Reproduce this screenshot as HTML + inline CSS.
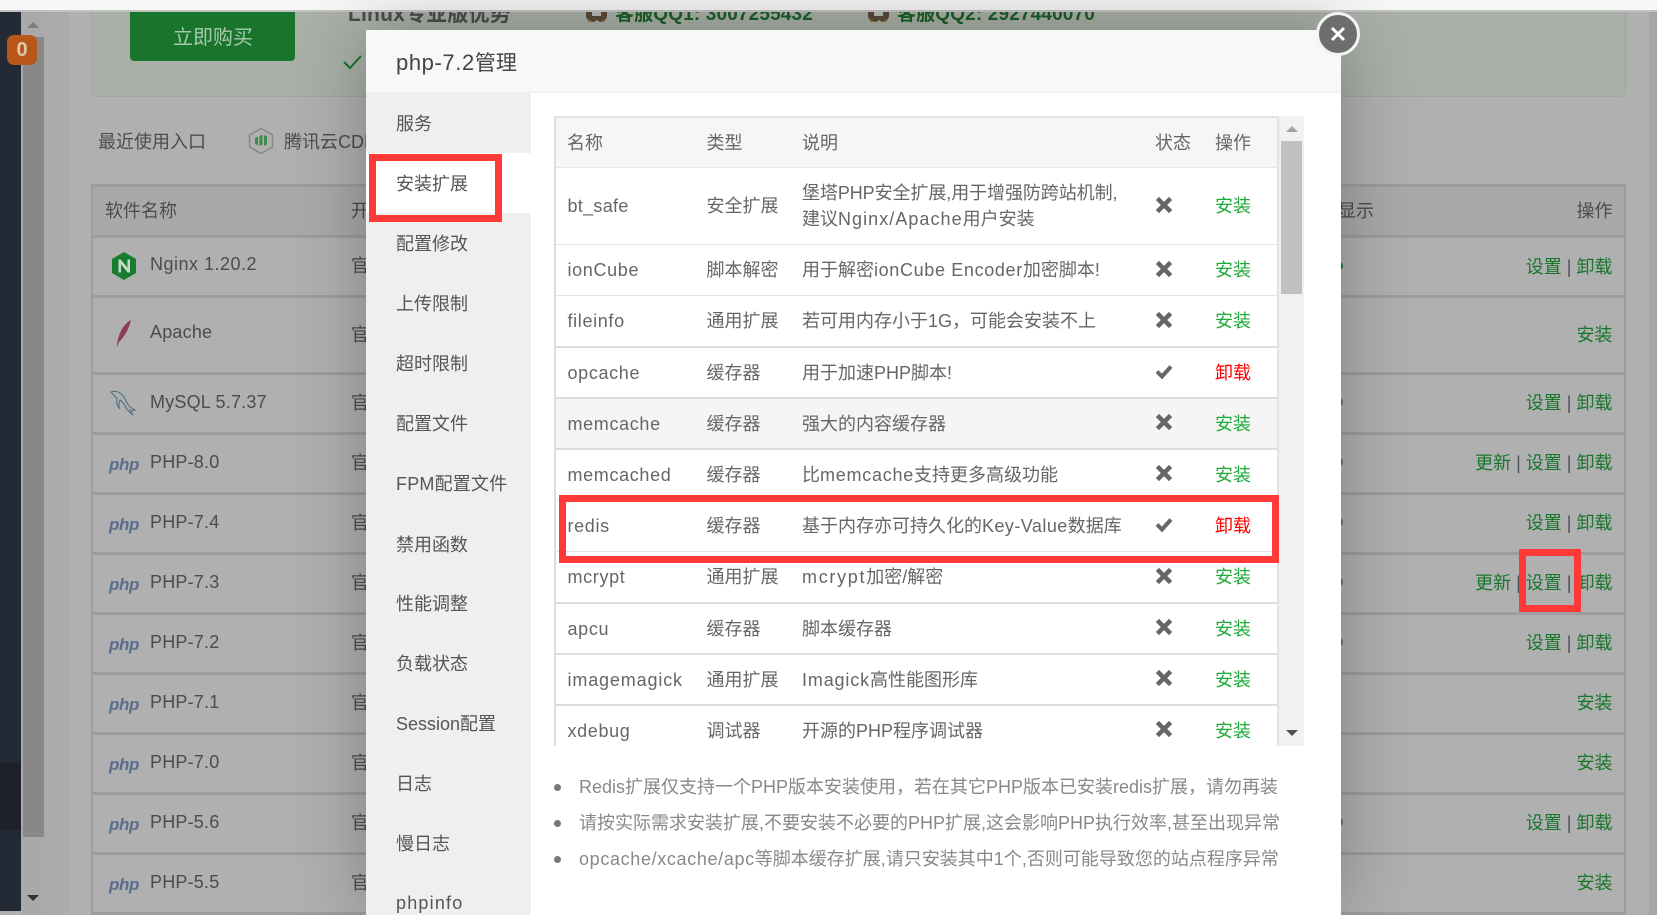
<!DOCTYPE html>
<html><head><meta charset="utf-8"><title>php-7.2管理</title>
<style>
html,body{margin:0;padding:0;width:1657px;height:915px;overflow:hidden;background:#b0b0b0}
body{position:relative;font:18px/26px "Liberation Sans","Noto Sans CJK SC",sans-serif;color:#4c4c4c}
.a{position:absolute}
.t{position:absolute;white-space:nowrap;height:26px;line-height:26px}
.r{position:absolute;white-space:nowrap;height:26px;line-height:26px;right:44.5px;color:#17762c}
.r i{font-style:normal;color:#4a4f58}
.l{position:absolute;left:91px;width:1535px;height:3px;background:#9d9d9d}
.p{position:absolute;left:109px;font:italic bold 17px/22px "Liberation Sans",sans-serif;color:#5b6d8e;letter-spacing:-.4px}
.n{position:absolute;left:150px;white-space:nowrap;line-height:26px;letter-spacing:.2px}
.o{position:absolute;left:351px;white-space:nowrap;line-height:26px}
.d{position:absolute;left:1333px;width:10px;height:10px;border-radius:50%;background:#6f6f6f}
.m{position:absolute;left:396px;white-space:nowrap;line-height:26px;color:#555}
.c{position:absolute;white-space:nowrap;line-height:26px;color:#666}
.x{left:567.5px;letter-spacing:.65px}.y{left:706.5px}.z{left:802px}.s{left:1215px;color:#1faa3a}.u{left:1215px;color:#f00}
.h{position:absolute;left:556px;width:721px;background:#ddd}
.note{position:absolute;left:579px;white-space:nowrap;line-height:26px;color:#888}
.b{position:absolute;left:554px;width:7px;height:7px;border-radius:50%;background:#777}
.red{position:absolute;border:7px solid #ff3838;box-sizing:border-box}
svg{position:absolute;overflow:visible}
</style></head><body>

<!-- top strip -->
<div class="a" style="left:0;top:0;width:1657px;height:10px;background:#f7f7f7"></div>
<div class="a" style="left:0;top:10px;width:1657px;height:2px;background:#c2c2c2"></div>

<!-- left sidebar + scrollbar -->
<div class="a" style="left:0;top:12px;width:21px;height:899px;background:#242a35"></div>
<div class="a" style="left:0;top:763px;width:21px;height:67px;background:#1d2229"></div>
<div class="a" style="left:21px;top:12px;width:25px;height:903px;background:#a9a9a9"></div>
<div class="a" style="left:23px;top:37px;width:21px;height:800px;background:#888"></div>
<div class="a" style="left:27px;top:22px;width:0;height:0;border:6px solid transparent;border-top:0;border-bottom:6px solid #7c7c7c"></div>
<div class="a" style="left:27px;top:895px;width:0;height:0;border:6px solid transparent;border-bottom:0;border-top:6px solid #333"></div>
<div class="a" style="left:7px;top:35px;width:30px;height:30px;border-radius:7px;background:#b9571b;color:#d9c9a8;font:bold 20px/30px 'Liberation Sans',sans-serif;text-align:center">0</div>

<!-- page bg -->
<div class="a" style="left:46px;top:12px;width:23px;height:903px;background:#ababab"></div>
<div class="a" style="left:1649px;top:12px;width:8px;height:903px;background:#a6a6a6"></div>

<!-- green banner -->
<div class="a" style="left:91px;top:12px;width:1535px;height:85px;box-sizing:border-box;background:#a9b0a7;border:1px solid #9fa69e;border-top:0;border-radius:0 0 6px 6px"></div>
<div class="a" style="left:130px;top:12px;width:165px;height:49px;background:#18752b;border-radius:0 0 4px 4px"></div>
<div class="t" style="left:173px;top:25px;font-size:20px;color:#a9c9ae">立即购买</div>
<svg style="left:343px;top:55px" width="20" height="14"><path d="M1 7l6 6L18 1" fill="none" stroke="#18752b" stroke-width="2"/></svg>
<div class="a" style="left:0;top:12px;width:1657px;height:18px;overflow:hidden;pointer-events:none">
 <div class="t" style="left:348px;top:-10px;font-size:21px;font-weight:bold;color:#4a4d4a;letter-spacing:.2px">Linux专业版优势</div>
 <svg style="left:586px;top:0" width="21" height="11"><path d="M0 0h21v5l-3 5h-4l-3-2-3 2H3L0 5z" fill="#5a4a3a"/><path d="M6 0h9v4H6z" fill="#bbb"/><path d="M1 7l3 3h3zM20 7l-3 3h-3z" fill="#c08020"/></svg>
 <div class="t" style="left:615px;top:-10px;font-size:19px;font-weight:bold;color:#1c5f28;letter-spacing:.15px">客服QQ1: 3007255432</div>
 <svg style="left:868px;top:0" width="21" height="11"><path d="M0 0h21v5l-3 5h-4l-3-2-3 2H3L0 5z" fill="#5a4a3a"/><path d="M6 0h9v4H6z" fill="#bbb"/><path d="M1 7l3 3h3zM20 7l-3 3h-3z" fill="#c08020"/></svg>
 <div class="t" style="left:897px;top:-10px;font-size:19px;font-weight:bold;color:#1c5f28;letter-spacing:.15px">客服QQ2: 2927440070</div>
</div>

<!-- recent -->
<div class="t" style="left:98px;top:129px">最近使用入口</div>
<svg style="left:248px;top:127px" width="26" height="28" viewBox="0 0 26 28"><path d="M13 1.500L24.500 8v12L13 26.500L1.500 20V8z" fill="none" stroke="#888" stroke-width="1.500"/><path d="M7 11l3-1.500v9L7 17zM11.500 9l3-1.500v10l-3 1.500zM16 8l3 1.500v8L16 19z" fill="#3f8a4c"/></svg>
<div class="t" style="left:284px;top:129px">腾讯云CDN</div>

<!-- background table -->
<div class="a" style="left:91px;top:184px;width:1535px;height:731px;box-sizing:border-box;border:2px solid #9d9d9d;border-bottom:0;border-top-width:3px"></div>
<div class="a" style="left:93px;top:187px;width:1531px;height:49px;background:#a9a9a9"></div>
<div class="l" style="top:235px"></div><div class="l" style="top:295px"></div><div class="l" style="top:372px"></div><div class="l" style="top:432px"></div><div class="l" style="top:492px"></div><div class="l" style="top:552px"></div><div class="l" style="top:612px"></div><div class="l" style="top:672px"></div><div class="l" style="top:732px"></div><div class="l" style="top:792px"></div><div class="l" style="top:852px"></div><div class="l" style="top:912px"></div>
<div class="t" style="left:105px;top:198px">软件名称</div>
<div class="o" style="top:198px">开</div>
<div class="t" style="left:1338px;top:198px">显示</div>
<div class="r" style="top:198px;color:#4c4c4c">操作</div>

<svg style="left:111px;top:252px" width="26" height="28" viewBox="0 0 26 28"><path d="M13 0L25 7v14l-12 7L1 21V7z" fill="#167c2e"/><path d="M8 20V8h1.500L17 17V8h1.500v12H17L9.500 11v9z" fill="#c8d8c8" stroke="#c8d8c8"/></svg>
<svg style="left:116px;top:320px" width="16" height="28" viewBox="0 0 16 28"><path d="M15 0C9 3 3 11 1 24l0 3 2-5C8 17 13 9 15 0z" fill="#8d3a55"/></svg>
<svg style="left:110px;top:390px" width="27" height="27" viewBox="0 0 27 27"><path d="M1 2c6-2 11 1 14 7 2 5 5 9 10 11-2 1-3 1-5 0l3 5c-3-2-6-5-8-9-1-2-3-5-5-6-1 3-2 6 0 9-3-3-4-7-3-11C5 7 3 4 1 2z" fill="none" stroke="#4d7189" stroke-width="1.100"/></svg>

<div class="n" style="top:251px;letter-spacing:.5px">Nginx 1.20.2</div>
<div class="n" style="top:319px">Apache</div>
<div class="n" style="top:389px">MySQL 5.7.37</div>
<div class="n" style="top:448.500px">PHP-8.0</div>
<div class="n" style="top:508.500px">PHP-7.4</div>
<div class="n" style="top:568.500px">PHP-7.3</div>
<div class="n" style="top:628.500px">PHP-7.2</div>
<div class="n" style="top:688.500px">PHP-7.1</div>
<div class="n" style="top:748.500px">PHP-7.0</div>
<div class="n" style="top:808.500px">PHP-5.6</div>
<div class="n" style="top:868.500px">PHP-5.5</div>

<div class="p" style="top:454px">php</div><div class="p" style="top:514px">php</div><div class="p" style="top:574px">php</div><div class="p" style="top:634px">php</div><div class="p" style="top:694px">php</div><div class="p" style="top:754px">php</div><div class="p" style="top:814px">php</div><div class="p" style="top:874px">php</div>

<div class="o" style="top:253px">官</div><div class="o" style="top:322px">官</div><div class="o" style="top:390px">官</div><div class="o" style="top:450px">官</div><div class="o" style="top:510px">官</div><div class="o" style="top:570px">官</div><div class="o" style="top:630px">官</div><div class="o" style="top:690px">官</div><div class="o" style="top:750px">官</div><div class="o" style="top:810px">官</div><div class="o" style="top:870px">官</div>

<div class="d" style="top:261px;background:#147a2b"></div><div class="d" style="top:397px"></div><div class="d" style="top:457px"></div><div class="d" style="top:517px"></div><div class="d" style="top:577px"></div><div class="d" style="top:637px"></div><div class="d" style="top:817px"></div>

<div class="r" style="top:254px">设置 <i>|</i> 卸载</div>
<div class="r" style="top:322px">安装</div>
<div class="r" style="top:390px">设置 <i>|</i> 卸载</div>
<div class="r" style="top:450px">更新 <i>|</i> 设置 <i>|</i> 卸载</div>
<div class="r" style="top:510px">设置 <i>|</i> 卸载</div>
<div class="r" style="top:570px">更新 <i>|</i> 设置 <i>|</i> 卸载</div>
<div class="r" style="top:630px">设置 <i>|</i> 卸载</div>
<div class="r" style="top:690px">安装</div>
<div class="r" style="top:750px">安装</div>
<div class="r" style="top:810px">设置 <i>|</i> 卸载</div>
<div class="r" style="top:870px">安装</div>

<!-- modal -->
<div class="a" style="left:366px;top:30px;width:975px;height:885px;background:#fff;box-shadow:0 0 70px rgba(0,0,0,.28)"></div>
<div class="a" style="left:366px;top:30px;width:975px;height:62px;background:#f8f8f8;border-bottom:1px solid #eee"></div>
<div class="t" style="left:396px;top:50px;font-size:21px;color:#444"><span style="font-size:22px;letter-spacing:.6px">php-7.2</span>管理</div>
<div class="a" style="left:366px;top:93px;width:165px;height:822px;background:#efefef"></div>
<div class="a" style="left:366px;top:153px;width:165px;height:60px;background:#fff"></div>
<div class="m" style="top:111px">服务</div>
<div class="m" style="top:171px">安装扩展</div>
<div class="m" style="top:231px">配置修改</div>
<div class="m" style="top:291px">上传限制</div>
<div class="m" style="top:351px">超时限制</div>
<div class="m" style="top:411px">配置文件</div>
<div class="m" style="top:471px;letter-spacing:.2px">FPM配置文件</div>
<div class="m" style="top:532px">禁用函数</div>
<div class="m" style="top:591px">性能调整</div>
<div class="m" style="top:651px">负载状态</div>
<div class="m" style="top:711px">Session配置</div>
<div class="m" style="top:771px">日志</div>
<div class="m" style="top:831px">慢日志</div>
<div class="m" style="top:890px;letter-spacing:1.2px">phpinfo</div>

<!-- modal table -->
<div class="a" style="left:554px;top:116px;width:725px;height:630px;box-sizing:border-box;border-left:2px solid #ddd;border-top:2px solid #e2e2e2;border-right:2px solid #e2e2e2"></div>
<div class="a" style="left:556px;top:118px;width:721px;height:49px;background:#f6f6f6"></div>
<div class="a" style="left:556px;top:399px;width:721px;height:49px;background:#f5f5f5"></div>
<div class="h" style="top:167px;height:1px;background:#e6e6e6"></div>
<div class="h" style="top:244px;height:1px;background:#e2e2e2"></div>
<div class="h" style="top:295px;height:1px;background:#e2e2e2"></div>
<div class="h" style="top:346px;height:2px"></div>
<div class="h" style="top:397px;height:2px"></div>
<div class="h" style="top:448px;height:2px"></div>
<div class="h" style="top:500px;height:1px;background:#e6e6e6"></div>
<div class="h" style="top:551px;height:1px;background:#e2e2e2"></div>
<div class="h" style="top:602px;height:2px"></div>
<div class="h" style="top:653px;height:2px"></div>
<div class="h" style="top:704px;height:2px"></div>

<div class="c" style="top:130px;left:567px">名称</div><div class="c y" style="top:130px">类型</div><div class="c z" style="top:130px">说明</div><div class="c" style="top:130px;left:1155px">状态</div><div class="c" style="top:130px;left:1215px">操作</div>

<div class="c x" style="top:193px;letter-spacing:.3px">bt_safe</div><div class="c y" style="top:193px">安全扩展</div>
<div class="c z" style="top:180px;letter-spacing:-.08px">堡塔PHP安全扩展,用于增强防跨站机制,</div>
<div class="c z" style="top:206px">建议<span style="letter-spacing:1.05px">Nginx/Apache</span>用户安装</div><div class="c s" style="top:193px">安装</div>

<div class="c x" style="top:257px">ionCube</div><div class="c y" style="top:257px">脚本解密</div><div class="c z" style="top:257px">用于解密<span style="letter-spacing:.65px">ionCube Encoder</span>加密脚本!</div><div class="c s" style="top:257px">安装</div>
<div class="c x" style="top:308px">fileinfo</div><div class="c y" style="top:308px">通用扩展</div><div class="c z" style="top:308px">若可用内存小于1G，可能会安装不上</div><div class="c s" style="top:308px">安装</div>
<div class="c x" style="top:360px">opcache</div><div class="c y" style="top:360px">缓存器</div><div class="c z" style="top:360px">用于加速PHP脚本!</div><div class="c u" style="top:360px">卸载</div>
<div class="c x" style="top:411px">memcache</div><div class="c y" style="top:411px">缓存器</div><div class="c z" style="top:411px">强大的内容缓存器</div><div class="c s" style="top:411px">安装</div>
<div class="c x" style="top:462px">memcached</div><div class="c y" style="top:462px">缓存器</div><div class="c z" style="top:462px">比<span style="letter-spacing:.75px">memcache</span>支持更多高级功能</div><div class="c s" style="top:462px">安装</div>
<div class="c x" style="top:513px">redis</div><div class="c y" style="top:513px">缓存器</div><div class="c z" style="top:513px">基于内存亦可持久化的<span style="letter-spacing:.45px">Key-Value</span>数据库</div><div class="c u" style="top:513px">卸载</div>
<div class="c x" style="top:564px">mcrypt</div><div class="c y" style="top:564px">通用扩展</div><div class="c z" style="top:564px"><span style="letter-spacing:1.7px">mcrypt</span>加密/解密</div><div class="c s" style="top:564px">安装</div>
<div class="c x" style="top:616px">apcu</div><div class="c y" style="top:616px">缓存器</div><div class="c z" style="top:616px">脚本缓存器</div><div class="c s" style="top:616px">安装</div>
<div class="c x" style="top:667px;letter-spacing:.85px">imagemagick</div><div class="c y" style="top:667px">通用扩展</div><div class="c z" style="top:667px"><span style="letter-spacing:.85px">Imagick</span>高性能图形库</div><div class="c s" style="top:667px">安装</div>
<div class="c x" style="top:718px">xdebug</div><div class="c y" style="top:718px">调试器</div><div class="c z" style="top:718px">开源的PHP程序调试器</div><div class="c s" style="top:718px">安装</div>

<!-- status icons -->
<svg style="left:1157px;top:198px" width="14" height="14"><path d="M2 2l10 10M12 2L2 12" stroke="#666" stroke-width="4.500" stroke-linecap="square" fill="none"/></svg>
<svg style="left:1157px;top:262px" width="14" height="14"><path d="M2 2l10 10M12 2L2 12" stroke="#666" stroke-width="4.500" stroke-linecap="square" fill="none"/></svg>
<svg style="left:1157px;top:313px" width="14" height="14"><path d="M2 2l10 10M12 2L2 12" stroke="#666" stroke-width="4.500" stroke-linecap="square" fill="none"/></svg>
<svg style="left:1155px;top:364px" width="18" height="15"><path d="M2 7.500l5 5L16 2.500" stroke="#666" stroke-width="4" fill="none"/></svg>
<svg style="left:1157px;top:415px" width="14" height="14"><path d="M2 2l10 10M12 2L2 12" stroke="#666" stroke-width="4.500" stroke-linecap="square" fill="none"/></svg>
<svg style="left:1157px;top:466px" width="14" height="14"><path d="M2 2l10 10M12 2L2 12" stroke="#666" stroke-width="4.500" stroke-linecap="square" fill="none"/></svg>
<svg style="left:1155px;top:517px" width="18" height="15"><path d="M2 7.500l5 5L16 2.500" stroke="#666" stroke-width="4" fill="none"/></svg>
<svg style="left:1157px;top:569px" width="14" height="14"><path d="M2 2l10 10M12 2L2 12" stroke="#666" stroke-width="4.500" stroke-linecap="square" fill="none"/></svg>
<svg style="left:1157px;top:620px" width="14" height="14"><path d="M2 2l10 10M12 2L2 12" stroke="#666" stroke-width="4.500" stroke-linecap="square" fill="none"/></svg>
<svg style="left:1157px;top:671px" width="14" height="14"><path d="M2 2l10 10M12 2L2 12" stroke="#666" stroke-width="4.500" stroke-linecap="square" fill="none"/></svg>
<svg style="left:1157px;top:722px" width="14" height="14"><path d="M2 2l10 10M12 2L2 12" stroke="#666" stroke-width="4.500" stroke-linecap="square" fill="none"/></svg>

<!-- modal scrollbar -->
<div class="a" style="left:1279px;top:116px;width:25px;height:630px;background:#f1f1f1"></div>
<div class="a" style="left:1281px;top:141px;width:21px;height:153px;background:#c1c1c1"></div>
<div class="a" style="left:1286px;top:126px;width:0;height:0;border:6px solid transparent;border-top:0;border-bottom:6px solid #a3a3a3"></div>
<div class="a" style="left:1286px;top:730px;width:0;height:0;border:6px solid transparent;border-bottom:0;border-top:6px solid #505050"></div>

<!-- notes -->
<div class="b" style="top:784px"></div><div class="b" style="top:820px"></div><div class="b" style="top:856px"></div>
<div class="note" style="top:774px">Redis扩展仅支持一个PHP版本安装使用，若在其它PHP版本已安装redis扩展，请勿再装</div>
<div class="note" style="top:810px">请按实际需求安装扩展,不要安装不必要的PHP扩展,这会影响PHP执行效率,甚至出现异常</div>
<div class="note" style="top:846px"><span style="letter-spacing:.65px">opcache/xcache/apc</span>等脚本缓存扩展,请只安装其中1个,否则可能导致您的站点程序异常</div>

<!-- close -->
<div class="a" style="left:1316px;top:12px;width:44px;height:44px;box-sizing:border-box;border-radius:50%;background:#6e6e6e;border:3px solid #f4f4f4"></div>
<svg style="left:1330px;top:26px" width="16" height="16"><path d="M2 2l12 12M14 2L2 14" stroke="#fff" stroke-width="3" fill="none"/></svg>

<!-- red highlights -->
<div class="red" style="left:369px;top:154px;width:133px;height:68px"></div>
<div class="red" style="left:559px;top:495px;width:720px;height:68px"></div>
<div class="red" style="left:1519px;top:549px;width:62px;height:63px"></div>

</body></html>
